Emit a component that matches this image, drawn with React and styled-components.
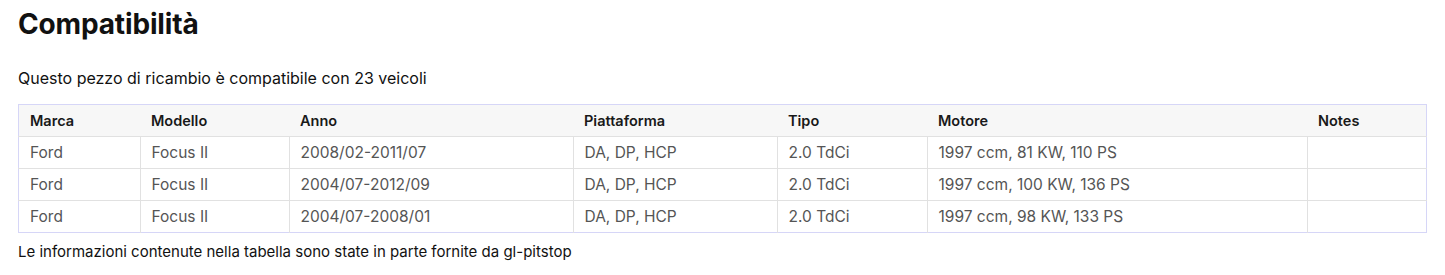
import styled, { createGlobalStyle } from "styled-components";

const GlobalStyle = createGlobalStyle`
  body {
    margin: 0;
    background: #ffffff;
    font-family: Inter, "Noto Sans", sans-serif;
    color: #111111;
  }
`;

const Section = styled.section`
  display: flex;
  flex-direction: column;
  padding: 8px 19px 0 18px;
`;

const Title = styled.h2`
  margin: 0;
  font-size: 28px;
  font-weight: 700;
  line-height: 32px;
  letter-spacing: -0.15px;
  color: #111111;
`;

const Intro = styled.p`
  margin: 28px 0 16px 0;
  font-size: 16px;
  line-height: 20px;
  color: #111111;
`;

const Table = styled.table`
  width: 100%;
  table-layout: fixed;
  border-collapse: collapse;
  border: 1px solid #d6d6f7;
`;

const HeadCell = styled.th`
  width: ${(p) => p.$width - 22}px;
  height: 31px;
  padding: 0 11px;
  text-align: left;
  font-size: 14.5px;
  font-weight: 600;
  color: #191919;
  background: #f7f7f7;
  border-bottom: 1px solid #e1e1e1;
`;

const Cell = styled.td`
  height: 31px;
  padding: 0 11px;
  font-size: 15.5px;
  color: #555555;
  border: 1px solid #e1e1e1;
  &:first-child {
    border-left: none;
  }
  &:last-child {
    border-right: none;
  }
`;

const Row = styled.tr`
  &:last-child td {
    border-bottom: none;
  }
`;

const Note = styled.p`
  margin: 9px 0 0 0;
  font-size: 15px;
  line-height: 20px;
  color: #111111;
`;

const columns = [
  { label: "Marca", width: 121 },
  { label: "Modello", width: 149 },
  { label: "Anno", width: 284 },
  { label: "Piattaforma", width: 204 },
  { label: "Tipo", width: 150 },
  { label: "Motore", width: 380 },
  { label: "Notes", width: 119 },
];

const vehicles = [
  ["Ford", "Focus II", "2008/02-2011/07", "DA, DP, HCP", "2.0 TdCi", "1997 ccm, 81 KW, 110 PS", ""],
  ["Ford", "Focus II", "2004/07-2012/09", "DA, DP, HCP", "2.0 TdCi", "1997 ccm, 100 KW, 136 PS", ""],
  ["Ford", "Focus II", "2004/07-2008/01", "DA, DP, HCP", "2.0 TdCi", "1997 ccm, 98 KW, 133 PS", ""],
];

export default function App() {
  return (
    <>
      <GlobalStyle />
      <Section>
        <Title>Compatibilità</Title>
        <Intro>Questo pezzo di ricambio è compatibile con 23 veicoli</Intro>
        <Table>
          <thead>
            <tr>
              {columns.map((c) => (
                <HeadCell key={c.label} $width={c.width}>
                  {c.label}
                </HeadCell>
              ))}
            </tr>
          </thead>
          <tbody>
            {vehicles.map((v, i) => (
              <Row key={i}>
                {v.map((val, j) => (
                  <Cell key={j}>{val}</Cell>
                ))}
              </Row>
            ))}
          </tbody>
        </Table>
        <Note>Le informazioni contenute nella tabella sono state in parte fornite da gl-pitstop</Note>
      </Section>
    </>
  );
}
